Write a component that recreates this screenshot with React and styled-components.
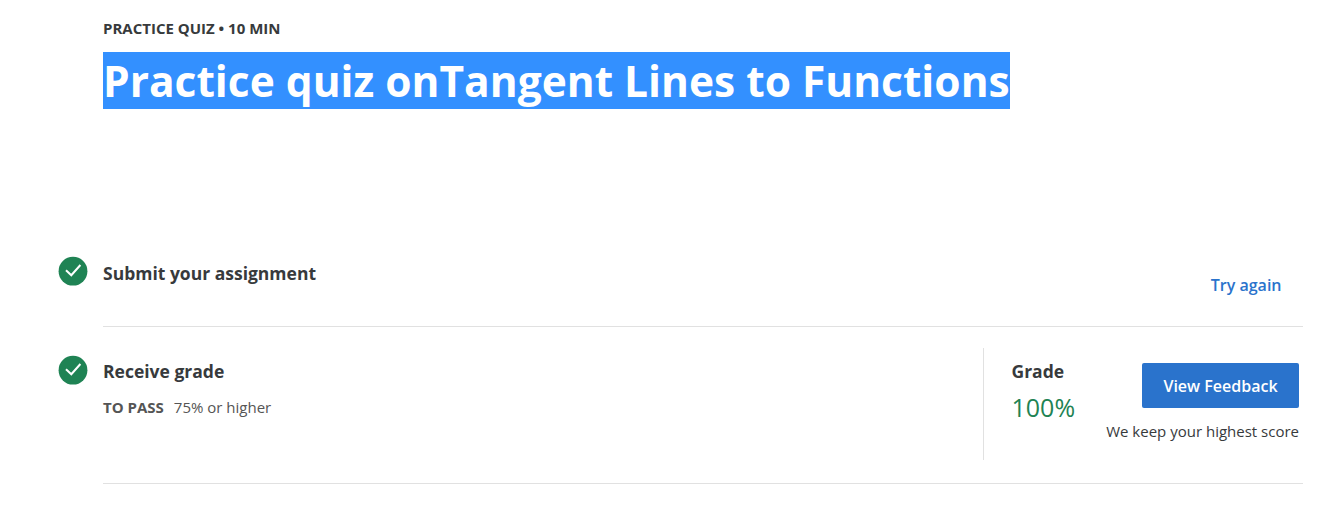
import React from "react";
import styled, { createGlobalStyle } from "styled-components";

const GlobalStyle = createGlobalStyle`
  * { box-sizing: border-box; }
  body { margin: 0; background: #fff; color: #373a3c; font-family: "Open Sans", sans-serif; }
  h1, h2, p { margin: 0; }
`;
const Page = styled.main`
  height: 514px;
  padding: 18px 24px 0 103px;
`;
const Header = styled.header`height: 210px;`;
const Kind = styled.p`
  font-size: 15px;
  font-weight: 700;
  line-height: 21px;
`;
const Title = styled.h1`
  width: fit-content;
  margin-top: 13px;
  height: 57px;
  font-size: 42.47px;
  font-weight: 700;
  line-height: 57px;
  white-space: nowrap;
  color: #fff;
  background: #3390ff;
`;
const Step = styled.section`
  display: flex;
  justify-content: space-between;
  height: ${(p) => p.$height}px;
  padding-top: ${(p) => p.$top}px;
  border-bottom: 1px solid #e1e1e1;
`;
const StepMain = styled.div`
  display: flex;
  gap: 15px;
  margin-left: -45px;
`;
const Check = styled.svg`
  width: 30px;
  height: 30px;
  flex: none;
`;
const StepTitle = styled.h2`
  font-size: 17.5px;
  font-weight: 700;
  line-height: 24px;
  margin-top: ${(p) => p.$offset || 0}px;
`;
const Requirement = styled.p`
  display: flex;
  gap: 10px;
  margin-top: 13px;
  font-size: 15px;
  line-height: 22px;
  color: #555;

  strong { font-weight: 700; }
`;
const TryAgain = styled.a`
  margin: 17px 21.5px 0 0;
  font-size: 16px;
  font-weight: 600;
  line-height: 24px;
  height: 24px;
  color: #2a73cc;
`;
const Result = styled.div`
  display: flex;
  justify-content: space-between;
  width: 320px;
  height: 112px;
  padding: 11px 4px 0 27.5px;
  margin-top: -7px;
  border-left: 1px solid #e1e1e1;
`;
const Score = styled.p`
  margin-top: 7px;
  font-size: 25px;
  line-height: 34px;
  color: #1f8354;
`;
const Actions = styled.div`
  display: flex;
  flex-direction: column;
  align-items: flex-end;
  padding-top: 4px;
`;
const Button = styled.button`
  width: 157px;
  height: 45px;
  padding: 0;
  border: 0;
  border-radius: 2px;
  color: #fff;
  background: #2a73cc;
  font: 600 16px "Open Sans", sans-serif;
`;
const Note = styled.p`
  margin-top: 13px;
  font-size: 15px;
  line-height: 21px;
  white-space: nowrap;
`;

const CheckIcon = () => (
  <Check viewBox="0 0 30 30" aria-hidden="true">
    <circle cx="15" cy="15.2" r="14.4" fill="#1f8354" />
    <path d="M8 14.2l5.3 5L22.4 9" fill="none" stroke="#fff" strokeWidth="2" />
  </Check>
);

export default function App() {
  return (
    <>
      <GlobalStyle />
      <Page>
        <Header>
          <Kind>PRACTICE QUIZ • 10 MIN</Kind>
          <Title>Practice quiz onTangent Lines to Functions</Title>
        </Header>
        <Step $height={99} $top={28}>
          <StepMain>
            <CheckIcon />
            <StepTitle $offset={5}>Submit your assignment</StepTitle>
          </StepMain>
          <TryAgain>Try again</TryAgain>
        </Step>
        <Step $height={157} $top={28}>
          <StepMain>
            <CheckIcon />
            <div>
              <StepTitle $offset={4}>Receive grade</StepTitle>
              <Requirement><strong>TO PASS</strong><span>75% or higher</span></Requirement>
            </div>
          </StepMain>
          <Result>
            <div>
              <StepTitle>Grade</StepTitle>
              <Score>100%</Score>
            </div>
            <Actions>
              <Button>View Feedback</Button>
              <Note>We keep your highest score</Note>
            </Actions>
          </Result>
        </Step>
      </Page>
    </>
  );
}
